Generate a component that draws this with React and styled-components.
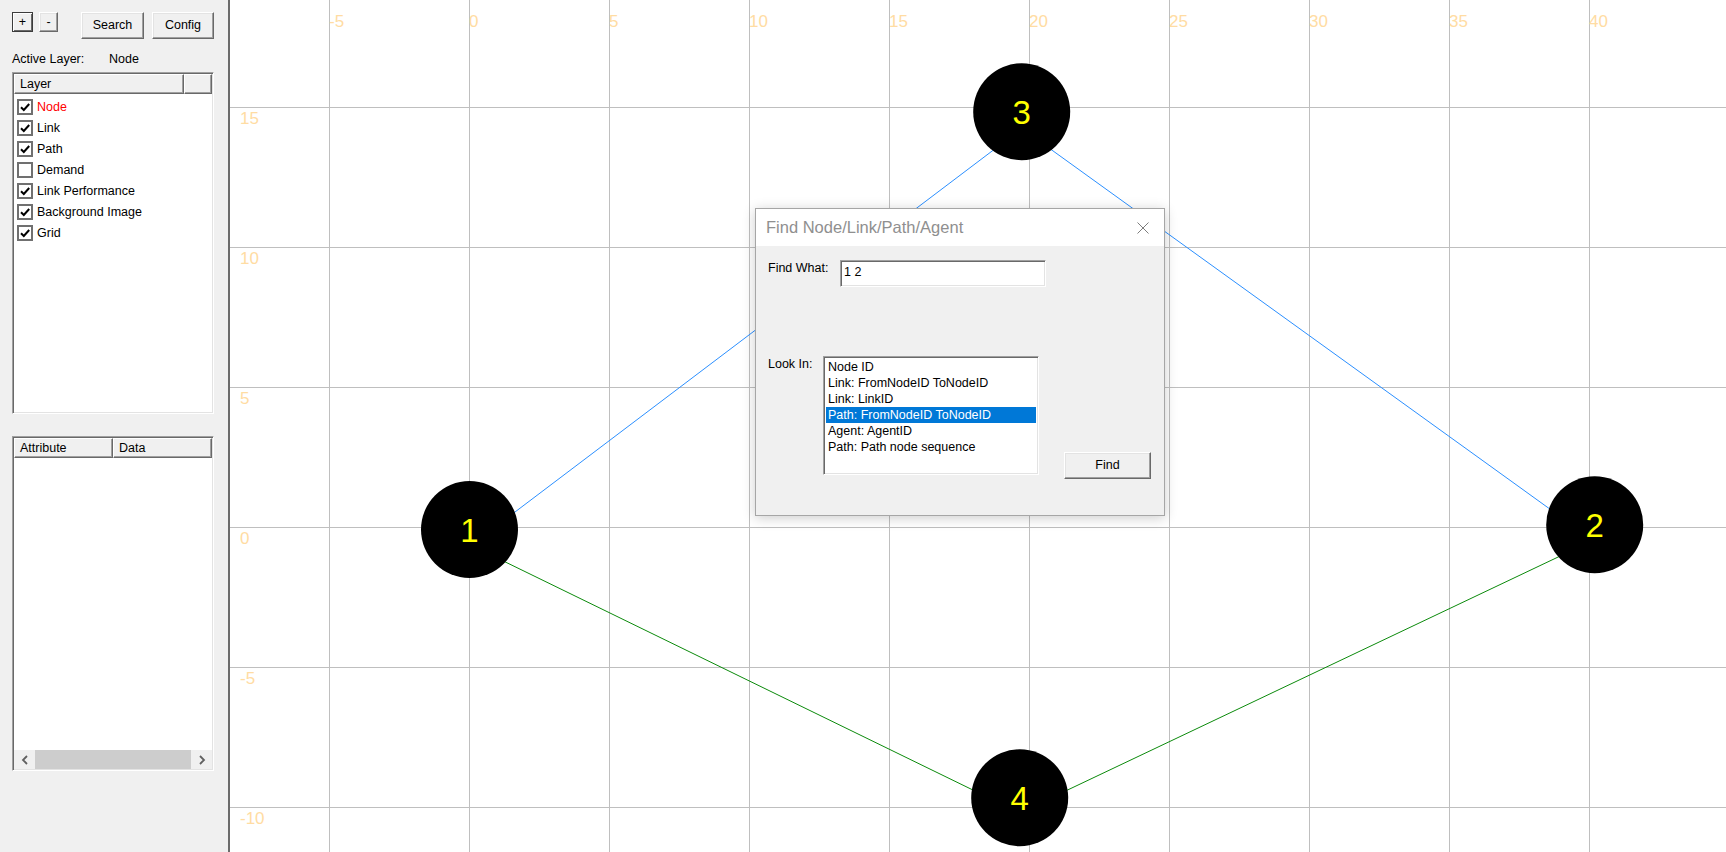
import React from "react";
import styled, { createGlobalStyle } from "styled-components";

const GlobalStyle = createGlobalStyle`
  html, body {
    margin: 0;
    padding: 0;
    height: 100%;
    overflow: hidden;
  }
  body {
    font-family: "Liberation Sans", Arial, sans-serif;
    font-size: 12.5px;
    color: #000;
    background: #fff;
  }
  #root {
    height: 100%;
  }
  * {
    box-sizing: border-box;
  }
`;

const layers = [
  { name: "Node", checked: true, active: true },
  { name: "Link", checked: true },
  { name: "Path", checked: true },
  { name: "Demand", checked: false },
  { name: "Link Performance", checked: true },
  { name: "Background Image", checked: true },
  { name: "Grid", checked: true },
];

const lookIn = [
  "Node ID",
  "Link: FromNodeID ToNodeID",
  "Link: LinkID",
  "Path: FromNodeID ToNodeID",
  "Agent: AgentID",
  "Path: Path node sequence",
];

// node centres in canvas pixels (x = 0 world -> 239.5, y = 0 world -> 527)
const nodes = {
  1: [239.5, 529.5],
  2: [1364.7, 524.7],
  3: [791.7, 111.7],
  4: [789.7, 797.8],
};

const links = [
  { from: 1, to: 3, color: "#2b8fff" },
  { from: 3, to: 2, color: "#2b8fff" },
  { from: 1, to: 4, color: "#0b8a0b" },
  { from: 4, to: 2, color: "#0b8a0b" },
];

const LINK_OFFSET = 13.5;

const offsetLink = (a, b) => {
  const [x1, y1] = nodes[a];
  const [x2, y2] = nodes[b];
  const dx = x2 - x1;
  const dy = y2 - y1;
  const len = Math.hypot(dx, dy);
  const ox = (-dy / len) * LINK_OFFSET;
  const oy = (dx / len) * LINK_OFFSET;
  return { x1: x1 + ox, y1: y1 + oy, x2: x2 + ox, y2: y2 + oy };
};

const xTicks = Array.from({ length: 10 }, (_, i) => ({ x: 99.5 + i * 140, label: -5 + i * 5 }));
const yTicks = Array.from({ length: 6 }, (_, i) => ({ y: 107.5 + i * 140, label: 15 - i * 5 }));

const CheckMark = () => (
  <svg width="12" height="12" viewBox="0 0 12 12">
    <path d="M2 6.2 L4.8 9 L10.2 3" fill="none" stroke="#000" strokeWidth="2" />
  </svg>
);

const Chevron = ({ dir }) => (
  <svg width="8" height="10" viewBox="0 0 8 10">
    <path
      d={dir === "left" ? "M6 1 L2 5 L6 9" : "M2 1 L6 5 L2 9"}
      fill="none"
      stroke="#606060"
      strokeWidth="1.8"
    />
  </svg>
);

const CloseIcon = () => (
  <svg width="12" height="12" viewBox="0 0 12 12">
    <path d="M0.5 0.5 L11.5 11.5 M11.5 0.5 L0.5 11.5" stroke="#7d7d7d" strokeWidth="1" />
  </svg>
);

const App = () => {
  return (
    <>
      <GlobalStyle />
      <Window>
        <SidePanel>
          <ToolRow>
            <WinButton $w={21} $h={20} $default>+</WinButton>
            <WinButton $w={19} $h={20} $gap={6}>-</WinButton>
            <WinButton $w={63} $h={27} $gap={23}>Search</WinButton>
            <WinButton $w={62} $h={27} $gap={8}>Config</WinButton>
          </ToolRow>

          <ActiveRow>
            <ActiveLabel>Active Layer:</ActiveLabel>
            <span>Node</span>
          </ActiveRow>

          <ListView $h={342} $gap={5}>
            <Header>
              <HeaderCell $w={170}>Layer</HeaderCell>
              <HeaderCell $grow />
            </Header>
            <Rows>
              {layers.map((layer) => (
                <LayerRow key={layer.name}>
                  <CheckBox>{layer.checked && <CheckMark />}</CheckBox>
                  <LayerName $active={layer.active}>{layer.name}</LayerName>
                </LayerRow>
              ))}
            </Rows>
          </ListView>

          <ListView $h={335} $gap={22}>
            <Header>
              <HeaderCell $w={99}>Attribute</HeaderCell>
              <HeaderCell $grow>Data</HeaderCell>
            </Header>
            <Rows />
            <HScroll>
              <ScrollArrow>
                <Chevron dir="left" />
              </ScrollArrow>
              <ScrollThumb />
              <ScrollArrow>
                <Chevron dir="right" />
              </ScrollArrow>
            </HScroll>
          </ListView>
        </SidePanel>

        <Canvas>
          <Plot>
            {xTicks.map((t) => (
              <GridLine key={"vx" + t.x} x1={t.x} y1={0} x2={t.x} y2={852} />
            ))}
            {yTicks.map((t) => (
              <GridLine key={"hy" + t.y} x1={0} y1={t.y} x2={1496} y2={t.y} />
            ))}
            {xTicks.map((t) => (
              <AxisLabel key={"lx" + t.x} x={t.x - 0.5} y={26.5}>
                {t.label}
              </AxisLabel>
            ))}
            {yTicks.map((t) => (
              <AxisLabel key={"ly" + t.y} x={10} y={t.y + 16}>
                {t.label}
              </AxisLabel>
            ))}
            {links.map((l) => (
              <line
                key={l.from + "-" + l.to}
                {...offsetLink(l.from, l.to)}
                stroke={l.color}
                strokeWidth="1"
              />
            ))}
            {Object.entries(nodes).map(([id, [cx, cy]]) => (
              <g key={id}>
                <circle cx={cx} cy={cy} r={48.5} fill="#000" />
                <NodeLabel x={cx} y={cy + 12}>
                  {id}
                </NodeLabel>
              </g>
            ))}
          </Plot>

          <Dialog>
            <TitleBar>
              <span>Find Node/Link/Path/Agent</span>
              <CloseIcon />
            </TitleBar>
            <DialogBody>
              <FieldRow>
                <FieldLabel $w={72}>Find What:</FieldLabel>
                <TextInput>1 2</TextInput>
              </FieldRow>
              <FieldRow $gap={69}>
                <FieldLabel $w={55}>Look In:</FieldLabel>
                <ListBox>
                  {lookIn.map((item, i) => (
                    <ListItem key={item} $selected={i === 3}>
                      {item}
                    </ListItem>
                  ))}
                </ListBox>
                <FindButton $w={87} $h={27}>Find</FindButton>
              </FieldRow>
            </DialogBody>
          </Dialog>
        </Canvas>
      </Window>
    </>
  );
};

export default App;

const Window = styled.div`
  display: flex;
  width: 100vw;
  height: 100vh;
`;

const SidePanel = styled.aside`
  flex: none;
  width: 230px;
  height: 100%;
  background: #f0f0f0;
  border-right: 2px solid #6b6b6b;
  padding: 12px 0 0 12px;
  display: flex;
  flex-direction: column;
`;

const ToolRow = styled.div`
  display: flex;
  align-items: flex-start;
  height: 27px;
`;

const WinButton = styled.button`
  width: ${(p) => p.$w}px;
  height: ${(p) => p.$h}px;
  margin: 0 0 0 ${(p) => p.$gap || 0}px;
  padding: 0;
  font: inherit;
  color: #000;
  background: #f0f0f0;
  border: 1px solid;
  border-color: ${(p) => (p.$default ? "#3c3c3c" : "#ffffff #696969 #696969 #ffffff")};
  box-shadow: ${(p) =>
    p.$default
      ? "inset 1px 1px #ffffff, inset -1px -1px #696969"
      : "inset -1px -1px #a0a0a0, inset 1px 1px #e3e3e3"};
  display: flex;
  align-items: center;
  justify-content: center;
  line-height: 1;
`;

const FindButton = styled(WinButton)`
  margin: 96px 0 0 25px;
`;

const ActiveRow = styled.div`
  display: flex;
  margin-top: 13px;
  height: 15px;
  line-height: 15px;
`;

const ActiveLabel = styled.span`
  width: 97px;
`;

const ListView = styled.div`
  width: 202px;
  height: ${(p) => p.$h}px;
  margin-top: ${(p) => p.$gap}px;
  background: #fff;
  border: 1px solid;
  border-color: #a0a0a0 #ffffff #ffffff #a0a0a0;
  box-shadow: inset 1px 1px #696969, inset -1px -1px #e3e3e3;
  padding: 1px;
  display: flex;
  flex-direction: column;
`;

const Header = styled.div`
  display: flex;
  height: 20px;
  flex: none;
`;

const HeaderCell = styled.div`
  width: ${(p) => (p.$grow ? "auto" : p.$w + "px")};
  flex: ${(p) => (p.$grow ? 1 : "none")};
  background: #f0f0f0;
  border: 1px solid;
  border-color: #ffffff #696969 #696969 #ffffff;
  box-shadow: inset -1px -1px #a0a0a0;
  padding-left: 5px;
  line-height: 18px;
  white-space: nowrap;
  overflow: hidden;
`;

const Rows = styled.div`
  flex: 1;
  padding: 2px 0 0 3px;
`;

const LayerRow = styled.div`
  display: flex;
  align-items: center;
  height: 21px;
`;

const CheckBox = styled.div`
  width: 16px;
  height: 16px;
  border: 2px solid #707070;
  background: #fff;
  display: flex;
  align-items: center;
  justify-content: center;
  margin-right: 4px;
`;

const LayerName = styled.span`
  color: ${(p) => (p.$active ? "#ff0000" : "#000")};
  white-space: nowrap;
`;

const HScroll = styled.div`
  flex: none;
  height: 19px;
  display: flex;
  background: #f0f0f0;
`;

const ScrollArrow = styled.div`
  width: 21px;
  display: flex;
  align-items: center;
  justify-content: center;
`;

const ScrollThumb = styled.div`
  flex: 1;
  background: #cdcdcd;
`;

const Canvas = styled.main`
  position: relative;
  flex: 1;
  height: 100%;
  overflow: hidden;
  background: #fff;
`;

const Plot = styled.svg`
  display: block;
  width: 100%;
  height: 100%;
`;

const GridLine = styled.line`
  stroke: #bfbfbf;
  stroke-width: 1;
`;

const AxisLabel = styled.text`
  font-family: "Liberation Sans", Arial, sans-serif;
  font-size: 17px;
  fill: #ffdca3;
`;

const NodeLabel = styled.text`
  font-family: "Liberation Sans", Arial, sans-serif;
  font-size: 33px;
  fill: #ffff00;
  text-anchor: middle;
`;

const Dialog = styled.section`
  position: absolute;
  left: 525px;
  top: 208px;
  width: 410px;
  height: 308px;
  background: #f0f0f0;
  border: 1px solid #a6a6a6;
  box-shadow: 0 2px 12px rgba(0, 0, 0, 0.2);
  display: flex;
  flex-direction: column;
`;

const TitleBar = styled.header`
  height: 37px;
  flex: none;
  background: #fff;
  display: flex;
  align-items: center;
  justify-content: space-between;
  padding: 0 15px 0 10px;
  font-size: 16.5px;
  color: #8f8f8f;
`;

const DialogBody = styled.div`
  padding: 14px 0 0 12px;
  display: flex;
  flex-direction: column;
`;

const FieldRow = styled.div`
  display: flex;
  align-items: flex-start;
  margin-top: ${(p) => p.$gap || 0}px;
`;

const FieldLabel = styled.label`
  width: ${(p) => p.$w}px;
  padding-top: 1px;
  line-height: 15px;
  white-space: nowrap;
`;

const TextInput = styled.div`
  width: 206px;
  height: 27px;
  background: #fff;
  border: 1px solid;
  border-color: #a0a0a0 #ffffff #ffffff #a0a0a0;
  box-shadow: inset 1px 1px #696969, inset -1px -1px #e3e3e3;
  padding: 4px 3px;
  line-height: 15px;
`;

const ListBox = styled.div`
  width: 216px;
  height: 119px;
  background: #fff;
  border: 1px solid;
  border-color: #a0a0a0 #ffffff #ffffff #a0a0a0;
  box-shadow: inset 1px 1px #696969, inset -1px -1px #e3e3e3;
  padding: 2px 2px 0 2px;
`;

const ListItem = styled.div`
  height: 16px;
  line-height: 16px;
  padding-left: 2px;
  white-space: nowrap;
  background: ${(p) => (p.$selected ? "#0078d7" : "transparent")};
  color: ${(p) => (p.$selected ? "#fff" : "#000")};
`;
